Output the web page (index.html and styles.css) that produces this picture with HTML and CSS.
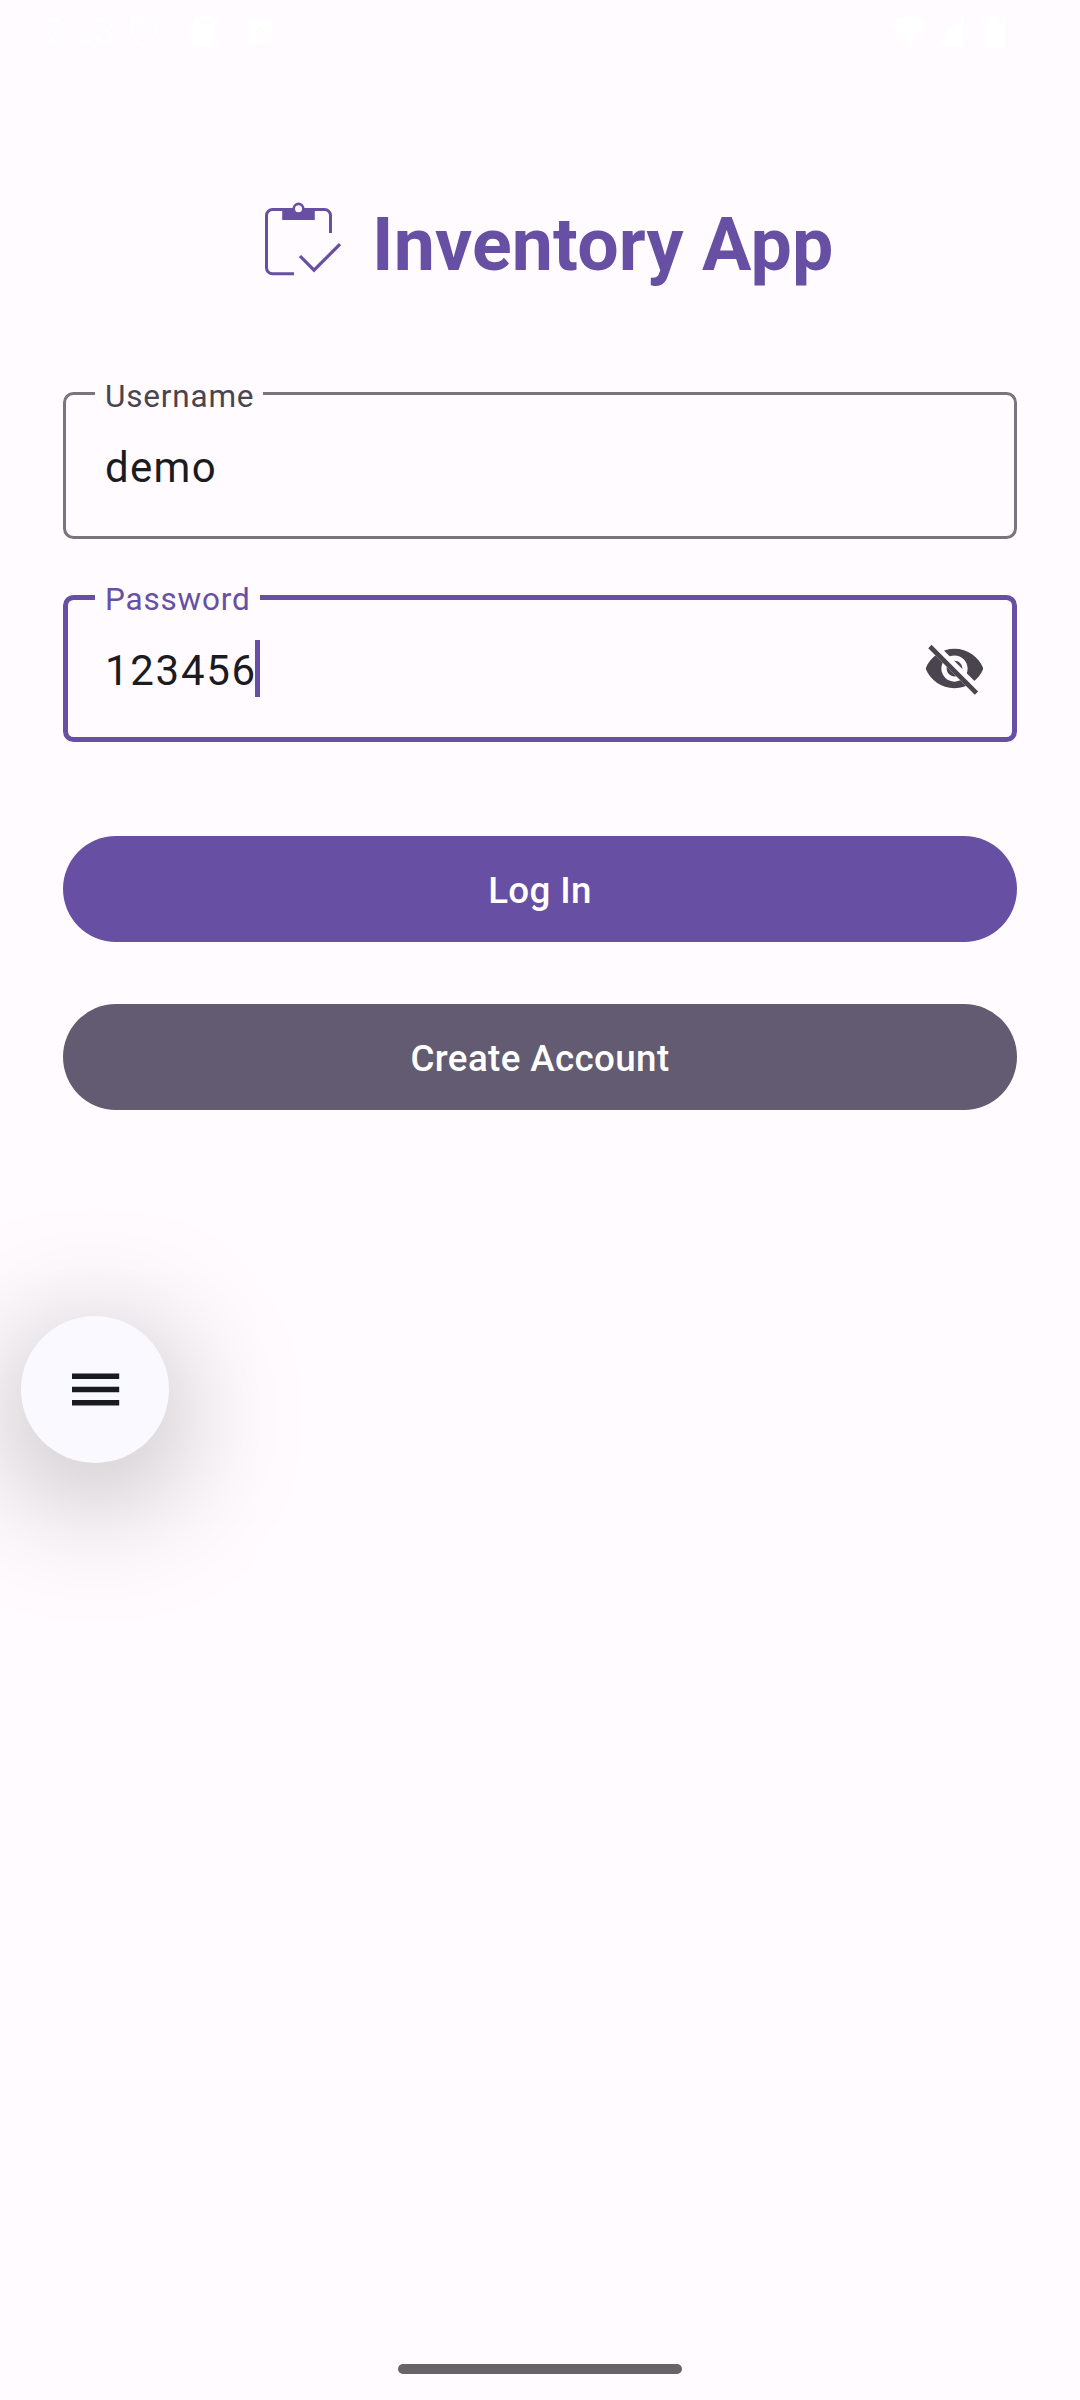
FILE: index.html
```html
<!DOCTYPE html>
<html lang="en">
<head>
<meta charset="utf-8">
<title>Inventory App</title>
<link rel="stylesheet" href="styles.css">
</head>
<body>
<div class="screen">
  <header class="status">
    <span class="clock">2:33</span>
    <svg class="shield" width="28" height="35" viewBox="0 0 28 35"><path d="M14 2C10 4 6 5 2 5v13c0 7 5 12 12 15 7-3 12-8 12-15V5c-4 0-8-1-12-3zM10 3c-2 7 0 10 5 13s7 6 5 11" fill="none" stroke="#fff" stroke-width="3"/></svg>
    <svg class="sd" width="26" height="31" viewBox="0 0 26 31"><path fill="#fff" fill-rule="evenodd" d="M9 0h15a2 2 0 0 1 2 2v27a2 2 0 0 1-2 2H2a2 2 0 0 1-2-2V8zM10 4v5h3V4zm5 0v5h3V4zm5 0v5h3V4z"/></svg>
    <svg class="letter" width="25" height="25" viewBox="0 0 25 25"><path fill="#fff" fill-rule="evenodd" d="M0 0h25v25H0zM11 7L6 19h2l1-3h6l1 3h2L13 7zm1 3 2 4h-4zM13 22v1h9v-1z"/></svg>
    <span class="grow"></span>
    <svg width="38" height="32" viewBox="0 0 38 32"><path fill="#fff" d="M0 8C11-3 27-3 38 8L19 32z"/></svg>
    <svg class="signal" width="31" height="31" viewBox="0 0 31 31"><path fill="#fff" d="M31 0v31H0z"/></svg>
    <svg class="battery" width="21" height="33" viewBox="0 0 21 33"><path fill="#fff" d="M6 0h9v3h4a2 2 0 0 1 2 2v26a2 2 0 0 1-2 2H2a2 2 0 0 1-2-2V5a2 2 0 0 1 2-2h4z"/></svg>
  </header>

  <main class="content">
    <div class="brand">
      <svg class="logo" width="82" height="80" viewBox="0 0 82 80">
        <g fill="none" stroke="#6750a4" stroke-width="3">
          <path d="M34 73.7H12.5a6 6 0 0 1-6-6V15.5a6 6 0 0 1 6-6h52a6 6 0 0 1 6 6V33"/>
          <path d="M40 56l14 14.2L80 44.2" stroke-width="3.2"/>
        </g>
        <path fill="#6750a4" d="M22.2 8H54.8V20H22.2z"/>
        <circle cx="38.5" cy="8.7" r="4.8" fill="#fffbff" stroke="#6750a4" stroke-width="2.6"/>
      </svg>
      <h1 class="title">Inventory App</h1>
    </div>

    <div class="field">
      <span class="label">Username</span>
      <span class="value">demo</span>
    </div>
    <div class="field focused">
      <span class="label">Password</span>
      <span class="value">123456</span><span class="caret"></span>
      <svg class="eye" width="63" height="63" viewBox="0 0 24 24">
        <clipPath id="strike"><path d="M2 4.27 19.73 22 22.27 19.46 4.54 1.73V1H23v22H1V4.27z"/></clipPath>
        <path clip-path="url(#strike)" fill="#49454f" d="M12 4.5C7 4.5 2.73 7.61 1 12c1.73 4.39 6 7.5 11 7.5s9.27-3.11 11-7.5c-1.73-4.39-6-7.5-11-7.5zM12 17c-2.76 0-5-2.24-5-5s2.24-5 5-5 5 2.24 5 5-2.24 5-5 5zm0-8c-1.66 0-3 1.34-3 3s1.34 3 3 3 3-1.34 3-3-1.34-3-3-3z"/>
        <path d="M3.27 4.27 19.74 20.74" fill="none" stroke="#49454f" stroke-width="1.8" stroke-linecap="square"/>
      </svg>
    </div>

    <button class="button primary">Log In</button>
    <button class="button secondary">Create Account</button>
  </main>

  <div class="fab">
    <svg width="50" height="36" viewBox="0 0 50 36"><path fill="#1a1b20" d="M2 1.5h47.2v5.5H2zM2 14.7h47.2v5.5H2zM2 27.9h47.2v5.5H2z"/></svg>
  </div>
  <div class="home-bar"></div>
</div>
</body>
</html>
```
FILE: styles.css
```css
* { box-sizing: border-box; }

body {
  margin: 0;
  background: #fffbff;
  font-family: Roboto, "Liberation Sans", sans-serif;
}

.screen {
  position: relative;
  display: flex;
  flex-direction: column;
  width: 1080px;
  height: 2400px;
  overflow: hidden;
}

.status {
  display: flex;
  align-items: center;
  height: 63px;
  padding: 0 75px 0 44px;
  color: #fff;
}

.clock { font-size: 37px; width: 86px; }
.sd { margin-left: 31px; }
.letter { margin-left: 33px; }
.grow { flex: 1; }
.signal { margin-left: 5px; }
.battery { margin-left: 20px; }

.content {
  display: flex;
  flex-direction: column;
  padding: 0 63px;
}

.brand {
  display: flex;
  align-items: flex-start;
  height: 329px;
  padding: 137px 0 0 197px;
}

.logo { margin-right: 30px; }

.title {
  margin: 0;
  color: #6750a4;
  font-size: 73.5px;
  font-weight: 700;
  line-height: 90px;
  letter-spacing: 0.15px;
  white-space: nowrap;
}

.field {
  position: relative;
  display: flex;
  align-items: center;
  height: 147px;
  padding: 4px 26px 0 39px;
  border: 3px solid #79747e;
  border-radius: 10.5px;
  color: #1c1b1f;
}

.field.focused {
  margin-top: 56px;
  padding-left: 37px;
  border: 5px solid #6750a4;
}

.label {
  position: absolute;
  left: 29px;
  top: -19px;
  padding: 0 9px 0 10px;
  background: #fffbff;
  color: #49454f;
  font-size: 31.5px;
  line-height: 42px;
  letter-spacing: 0.8px;
}

.focused .label { left: 27px; top: -21px; color: #6750a4; }

.value {
  font-size: 42px;
  line-height: 63px;
  letter-spacing: 1.31px;
}

.focused .value { letter-spacing: 1.7px; }

.caret {
  width: 5px;
  height: 57px;
  margin: -4px 0 0 -2px;
  background: #6750a4;
}

.eye { margin: -4px 0 0 auto; }

.button {
  height: 106px;
  padding: 3px 0 0;
  border: 0;
  border-radius: 53px;
  color: #fff;
  font: 500 36.75px/52px Roboto, "Liberation Sans", sans-serif;
  letter-spacing: 0.37px;
}

.primary { margin-top: 94px; background: #6750a4; }
.secondary { margin-top: 62px; background: #625b71; }

.fab {
  position: absolute;
  left: 21px;
  top: 1315.5px;
  display: flex;
  align-items: center;
  justify-content: center;
  width: 148px;
  height: 147px;
  padding-top: 2px;
  border-radius: 50%;
  background: #f9f9ff;
  box-shadow: 0 26px 132px rgba(0, 0, 0, 0.34);
}

.home-bar {
  width: 284px;
  height: 10px;
  margin: auto auto 26px;
  border-radius: 5px;
  background: #666468;
}
```
